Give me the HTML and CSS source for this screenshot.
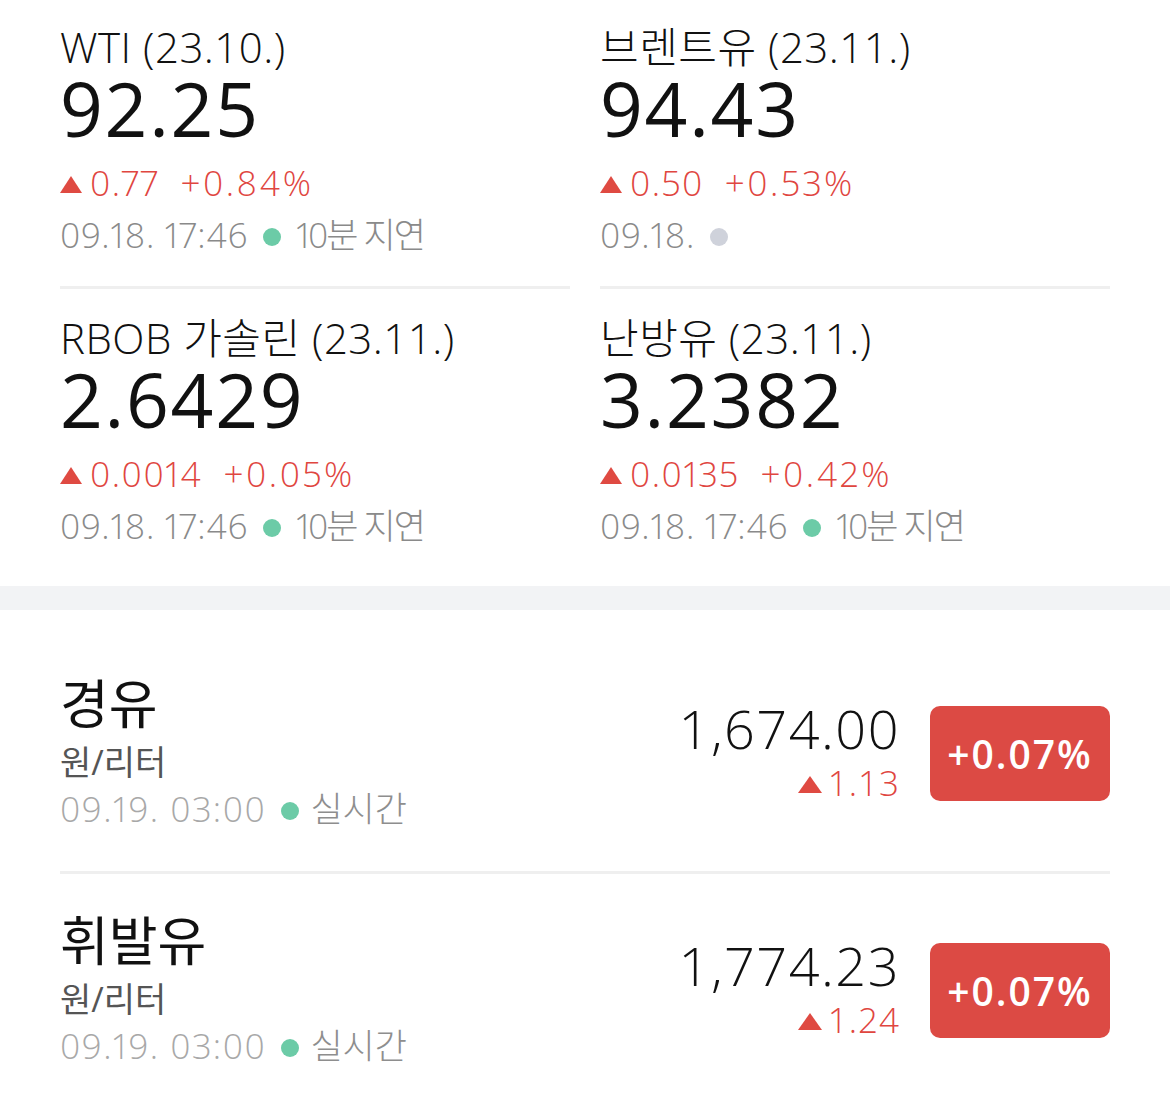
FILE: index.html
```html
<!DOCTYPE html>
<html lang="ko">
<head>
    <meta charset="UTF-8">
    <meta name="viewport" content="width=device-width, initial-scale=1.0">
    <title>국제유가 / 국내유가</title>
    <link rel="stylesheet" href="styles.css">
</head>
<body>
    <div class="quotes">
        <div class="quote">
            <div class="q-name">WTI (23.10.)</div>
            <div class="q-price">92.25</div>
            <div class="q-change"><span class="up-tri"></span><span class="amt">0.77</span><span class="pct">+0.84%</span></div>
            <div class="q-time"><span class="stamp">09.18. 17:46</span><span class="dot live"></span><span class="delay">10분 지연</span></div>
        </div>
        <div class="quote">
            <div class="q-name">브렌트유 (23.11.)</div>
            <div class="q-price">94.43</div>
            <div class="q-change"><span class="up-tri"></span><span class="amt">0.50</span><span class="pct">+0.53%</span></div>
            <div class="q-time"><span class="stamp">09.18.</span><span class="dot closed"></span></div>
        </div>
        <div class="quote">
            <div class="q-name">RBOB 가솔린 (23.11.)</div>
            <div class="q-price">2.6429</div>
            <div class="q-change"><span class="up-tri"></span><span class="amt">0.0014</span><span class="pct">+0.05%</span></div>
            <div class="q-time"><span class="stamp">09.18. 17:46</span><span class="dot live"></span><span class="delay">10분 지연</span></div>
        </div>
        <div class="quote">
            <div class="q-name">난방유 (23.11.)</div>
            <div class="q-price">3.2382</div>
            <div class="q-change"><span class="up-tri"></span><span class="amt">0.0135</span><span class="pct">+0.42%</span></div>
            <div class="q-time"><span class="stamp">09.18. 17:46</span><span class="dot live"></span><span class="delay">10분 지연</span></div>
        </div>
    </div>

    <div class="band"></div>

    <ul class="fuel-list">
        <li class="fuel">
            <div class="fuel-info">
                <div class="fuel-name">경유</div>
                <div class="fuel-unit">원/리터</div>
                <div class="fuel-time"><span class="stamp">09.19. 03:00</span><span class="dot live"></span><span class="kind">실시간</span></div>
            </div>
            <div class="fuel-price">
                <div class="fp-value">1,674.00</div>
                <div class="fp-change"><span class="up-tri"></span>1.13</div>
            </div>
            <div class="badge">+0.07%</div>
        </li>
        <li class="fuel">
            <div class="fuel-info">
                <div class="fuel-name">휘발유</div>
                <div class="fuel-unit">원/리터</div>
                <div class="fuel-time"><span class="stamp">09.19. 03:00</span><span class="dot live"></span><span class="kind">실시간</span></div>
            </div>
            <div class="fuel-price">
                <div class="fp-value">1,774.23</div>
                <div class="fp-change"><span class="up-tri"></span>1.24</div>
            </div>
            <div class="badge">+0.07%</div>
        </li>
    </ul>
</body>
</html>
```

FILE: styles.css
```css
body {
    margin: 0;
    background: #fff;
    color: #111;
    font-family: "Open Sans", "Noto Sans CJK KR", sans-serif;
}

/* top grid of futures quotes */
.quotes {
    display: grid;
    grid-template-columns: 1fr 1fr;
    column-gap: 30px;
    padding: 0 60px;
}
.quote {
    padding: 22px 0 27px;
}
.quote:nth-child(-n+2) {
    border-bottom: 3px solid #efefef;
}
.quote:nth-child(n+3) {
    padding: 24px 0 36px;
}
.q-name {
    font-size: 42px;
    font-weight: 300;
    line-height: 50px;
    letter-spacing: 0.5px;
    color: #111;
}
.q-price {
    font-size: 75px;
    line-height: 72px;
    letter-spacing: 1.7px;
    color: #111;
}
.q-change {
    margin-top: 15px;
    font-size: 35px;
    font-weight: 300;
    line-height: 48px;
    color: #e0463f;
    font-variant-numeric: proportional-nums;
    display: flex;
    align-items: center;
}
.q-change .amt {
    letter-spacing: 1.5px;
}
.q-change .pct {
    margin-left: 21px;
    letter-spacing: 2.5px;
}
.up-tri {
    display: inline-block;
    width: 0;
    height: 0;
    border-left: 11px solid transparent;
    border-right: 11px solid transparent;
    border-bottom: 17px solid #df4a42;
    margin-right: 8px;
    margin-top: 3px;
}
.q-time {
    margin-top: 4px;
    font-size: 35px;
    font-weight: 300;
    line-height: 48px;
    color: #8a8a8a;
    font-variant-numeric: proportional-nums;
    display: flex;
    align-items: center;
}
.q-time .stamp {
    letter-spacing: 0.7px;
}
.q-time .delay {
    letter-spacing: -2px;
}
.dot {
    display: inline-block;
    width: 18px;
    height: 18px;
    border-radius: 50%;
    margin: 3px 15px 0 15px;
}
.dot.live {
    background: #6ccba7;
}
.dot.closed {
    background: #cfd2db;
}

.band {
    height: 24px;
    background: #f2f3f5;
}

/* domestic fuel list */
.fuel-list {
    list-style: none;
    margin: 0;
    padding: 27px 60px 0;
}
.fuel {
    display: flex;
    align-items: center;
    padding: 34px 0 40px;
}
.fuel + .fuel {
    border-top: 3px solid #efefef;
}
.fuel-name {
    font-size: 53px;
    line-height: 66px;
    color: #111;
}
.fuel-unit {
    margin-top: 3px;
    font-size: 34px;
    line-height: 44px;
    color: #555;
}
.fuel-time {
    margin-top: 3px;
    font-size: 35px;
    font-weight: 300;
    line-height: 44px;
    color: #a8a8a8;
    font-variant-numeric: proportional-nums;
    display: flex;
    align-items: center;
}
.fuel-time .stamp {
    letter-spacing: 1.6px;
}
.fuel-time .dot {
    margin: 3px 11px 0 15px;
}
.fuel-time .kind {
    color: #8e8e8e;
}
.fuel-price {
    margin-left: auto;
    text-align: right;
}
.fp-value {
    font-size: 54px;
    line-height: 64px;
    font-weight: 300;
    letter-spacing: 1.5px;
    color: #111;
}
.fp-change {
    font-size: 35px;
    font-weight: 300;
    line-height: 46px;
    color: #e0463f;
    letter-spacing: 1px;
    display: flex;
    align-items: center;
    justify-content: flex-end;
}
.fp-change .up-tri {
    border-left-width: 12px;
    border-right-width: 12px;
    margin-right: 6px;
}
.badge {
    margin: 4px 0 0 30px;
    width: 180px;
    height: 95px;
    border-radius: 10px;
    background: #dc4a44;
    color: #fff;
    font-size: 39px;
    font-weight: 600;
    letter-spacing: 2px;
    display: flex;
    align-items: center;
    justify-content: center;
}
```
